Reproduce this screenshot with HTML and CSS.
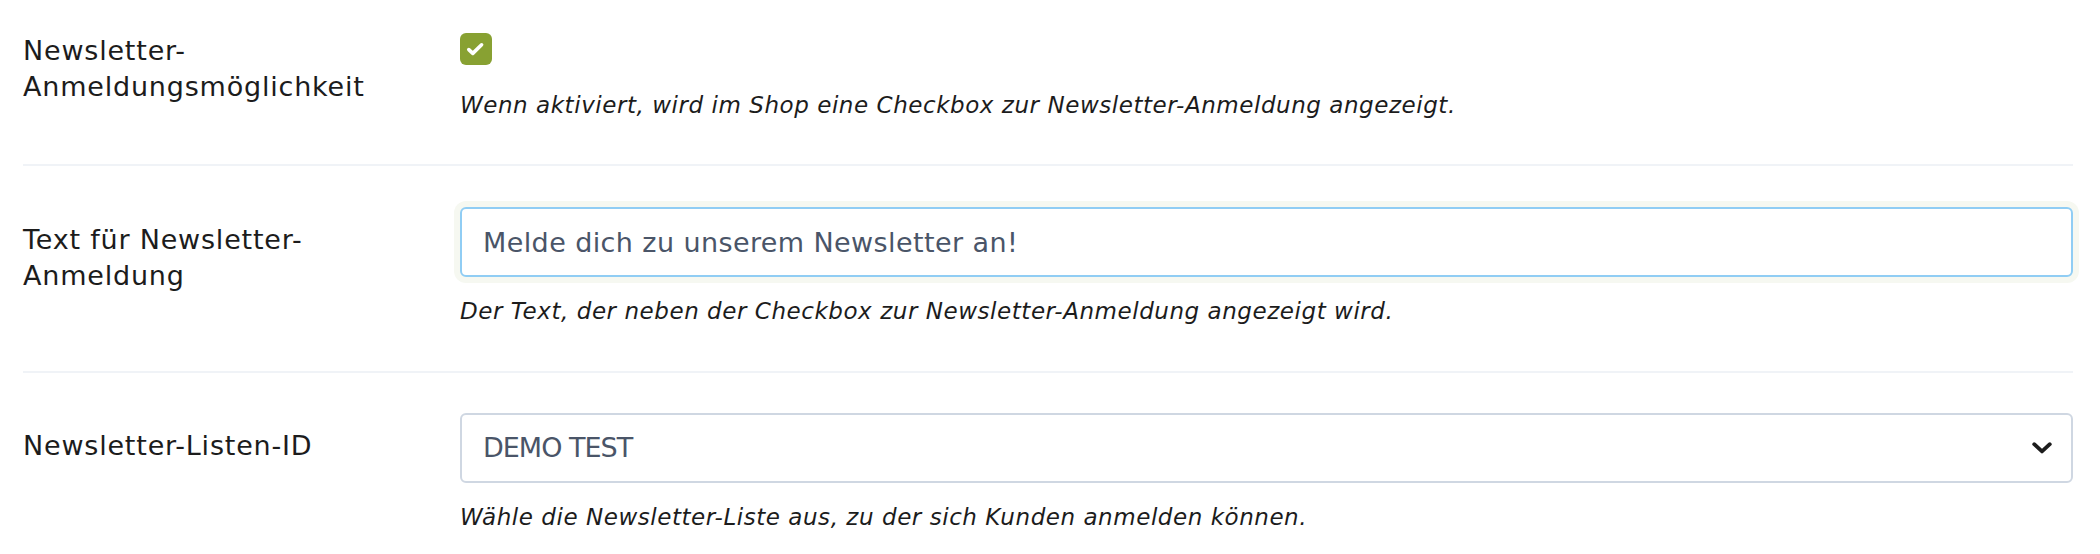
FILE: index.html
```html
<!DOCTYPE html>
<html lang="de">
<head>
<meta charset="utf-8">
<title>Newsletter-Einstellungen</title>
<link rel="stylesheet" href="styles.css">
</head>
<body>
<div class="settings">
  <div class="row row-first">
    <div class="label label-check">Newsletter-Anmeldungsmöglichkeit</div>
    <div class="control">
      <div class="checkbox checkbox-on">
        <svg viewBox="0 0 32 32" width="32" height="32" aria-hidden="true"><polyline points="8.8,16.6 12.8,20.4 21.6,11.8" fill="none" stroke="#ffffff" stroke-width="3.6" stroke-linecap="round" stroke-linejoin="round"/></svg>
      </div>
      <p class="help help-check">Wenn aktiviert, wird im Shop eine Checkbox zur Newsletter-Anmeldung angezeigt.</p>
    </div>
  </div>
  <div class="row">
    <div class="label label-field">Text für Newsletter-Anmeldung</div>
    <div class="control">
      <input class="field field-focus" type="text" value="Melde dich zu unserem Newsletter an!">
      <p class="help">Der Text, der neben der Checkbox zur Newsletter-Anmeldung angezeigt wird.</p>
    </div>
  </div>
  <div class="row row-last">
    <div class="label label-field">Newsletter-Listen-ID</div>
    <div class="control">
      <div class="field select">
        <span class="select-value">DEMO TEST</span>
        <svg class="chevron" viewBox="0 0 20 12" width="20" height="12" aria-hidden="true"><polyline points="2.2,2.2 10,9.4 17.8,2.2" fill="none" stroke="#1c1c1c" stroke-width="3.8" stroke-linecap="round" stroke-linejoin="round"/></svg>
      </div>
      <p class="help">Wähle die Newsletter-Liste aus, zu der sich Kunden anmelden können.</p>
    </div>
  </div>
</div>
</body>
</html>
```

FILE: styles.css
```css
html, body {
  margin: 0;
  padding: 0;
  background: #ffffff;
}

body {
  font-family: "DejaVu Sans", sans-serif;
  color: #1c1c1c;
}

.settings {
  padding: 0 27px 0 23px;
}

.row {
  display: grid;
  grid-template-columns: 437px 1fr;
  padding: 41px 0 44px;
  border-top: 2px solid #f0f3f7;
}

.row-first {
  border-top: none;
  padding-top: 33px;
  padding-bottom: 43px;
}

.row-last {
  padding-top: 40px;
  padding-bottom: 18px;
}

.label {
  font-size: 27px;
  line-height: 36px;
  letter-spacing: 0.8px;
  color: #1c1c1c;
  padding-right: 40px;
}

.label-check {
  margin-top: 0;
}

.label-field {
  padding-top: 15px;
}

.control {
  display: flex;
  flex-direction: column;
  align-items: stretch;
}

.checkbox {
  width: 32px;
  height: 32px;
  border-radius: 6px;
  background: #88a132;
  display: flex;
  align-items: center;
  justify-content: center;
}

.checkbox svg {
  display: block;
}

.field {
  box-sizing: border-box;
  width: 100%;
  height: 70px;
  margin: 0;
  padding: 0 19px 0 21px;
  border: 2px solid #cfd7e2;
  border-radius: 6px;
  background: #ffffff;
  font-family: "DejaVu Sans", sans-serif;
  font-size: 27px;
  color: #4a5568;
  outline: none;
}

input.field {
  letter-spacing: 0.4px;
}

.field-focus {
  border-color: #90cdf4;
  box-shadow: 0 0 0 6px #f6f8f1;
}

.select {
  display: flex;
  align-items: center;
  justify-content: space-between;
}

.select-value {
  letter-spacing: -1px;
  line-height: 36px;
}

.chevron {
  display: block;
}

.help {
  margin: 18px 0 0;
  font-size: 23px;
  line-height: 32px;
  font-style: italic;
  letter-spacing: 0.55px;
  color: #1c1c1c;
}

.help-check {
  margin-top: 24px;
}
```
